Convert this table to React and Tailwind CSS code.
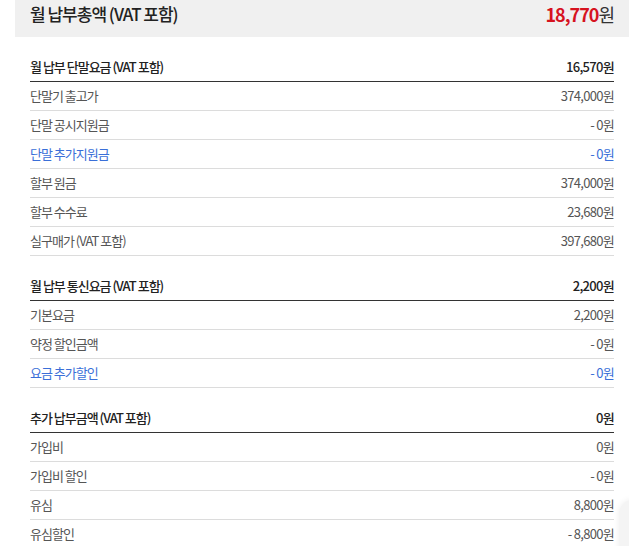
import React from 'react';

const sections = [
  {
    title: '월 납부 단말요금 (VAT 포함)',
    total: '16,570원',
    rows: [
      { label: '단말기 출고가', value: '374,000원' },
      { label: '단말 공시지원금', value: '- 0원' },
      { label: '단말 추가지원금', value: '- 0원', blue: true },
      { label: '할부 원금', value: '374,000원' },
      { label: '할부 수수료', value: '23,680원' },
      { label: '실구매가 (VAT 포함)', value: '397,680원' },
    ],
  },
  {
    title: '월 납부 통신요금 (VAT 포함)',
    total: '2,200원',
    rows: [
      { label: '기본요금', value: '2,200원' },
      { label: '약정 할인금액', value: '- 0원' },
      { label: '요금 추가할인', value: '- 0원', blue: true },
    ],
  },
  {
    title: '추가 납부금액 (VAT 포함)',
    total: '0원',
    rows: [
      { label: '가입비', value: '0원' },
      { label: '가입비 할인', value: '- 0원' },
      { label: '유심', value: '8,800원' },
      { label: '유심할인', value: '- 8,800원' },
    ],
  },
];

function Section({ title, total, rows }) {
  return (
    <div className="mt-[15px] mx-[15px]">
      <div className="h-[30px] flex items-center justify-between border-b border-[#333] text-[13px] font-medium text-[#222]">
        <span>{title}</span>
        <span className="tracking-[-0.7px]">{total}</span>
      </div>
      {rows.map((r) => (
        <div key={r.label}
          className={`h-[29px] flex items-center justify-between border-b border-[#dcdcdc] text-[13px] ${r.blue ? 'text-[#3a6fd8]' : 'text-[#555]'}`}>
          <span>{r.label}</span>
          <span className="tracking-[-0.7px]">{r.value}</span>
        </div>
      ))}
    </div>
  );
}

export default function App() {
  return (
    <div className="relative w-[629px] h-[546px] overflow-hidden bg-white pl-[15px] tracking-[-1px]"
      style={{ fontFamily: '"Noto Sans CJK KR", "Noto Sans", sans-serif' }}>
      <div className="h-[37px] bg-[#f0f0f0] px-[15px] pt-[2px] flex items-start justify-between">
        <span className="text-[17px] leading-[24px] font-medium text-[#222]">월 납부총액 (VAT 포함)</span>
        <span className="text-[18px] leading-[24px] text-[#333]">
          <span className="font-bold text-[#d6131f]">18,770</span>원
        </span>
      </div>
      {sections.map((s) => (
        <Section key={s.title} {...s} />
      ))}
      <div className="absolute left-[619px] top-[500px] w-[40px] h-[80px] rounded-tl-[14px] bg-[#f4f4f4] shadow-[0_0_6px_rgba(0,0,0,0.08)]" />
    </div>
  );
}
